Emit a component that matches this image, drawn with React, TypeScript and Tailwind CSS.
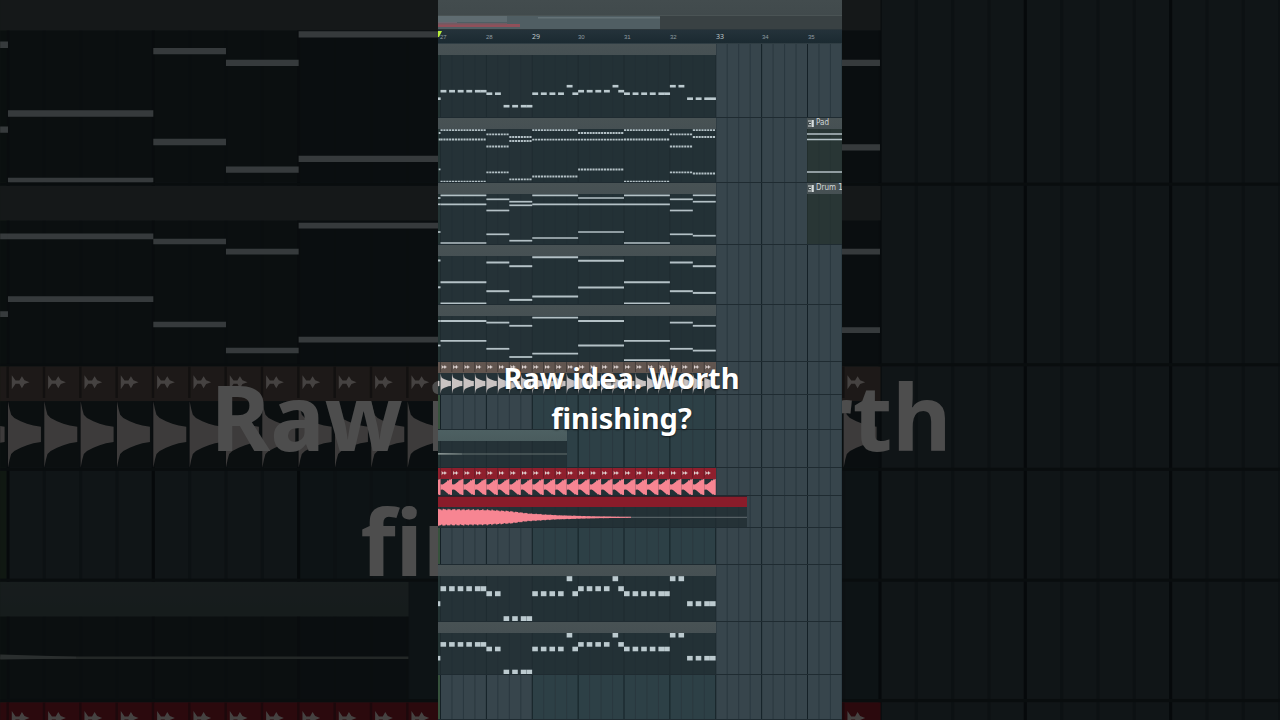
import type { ReactNode } from "react";

const BAR = 45.875;
const STEP = BAR / 16;
const ORIGIN = 2.5;
const barX = (bar: number) => ORIGIN + (bar - 27) * BAR;

type Chord = { from: number; to: number; ys: number[] };

const segments: [number, number][] = [
  [26.9, 27],
  [27, 28],
  [28, 28.5],
  [28.5, 29],
  [29, 30],
  [30, 31],
  [31, 32],
  [32, 32.5],
  [32.5, 33],
];

const toChords = (ys: number[][]): Chord[] =>
  ys.map((y, i) => ({ from: segments[i][0], to: segments[i][1], ys: y }));

const padChords = toChords([
  [4, 10.5, 40.3],
  [1.2, 10.5, 52.7],
  [5.3, 17.5, 43.3],
  [8, 12, 50.3],
  [1.2, 10.6, 47.5],
  [4, 10.6, 40.5],
  [1.2, 10.5, 52.7],
  [5.3, 17.5, 43.3],
  [1.2, 8, 44.5],
]);

const keysChords = toChords([
  [4, 10.3, 38],
  [1.3, 10.3, 49],
  [5.3, 16.5, 40.3],
  [7.7, 11.3, 46.7],
  [1.3, 10.3, 44],
  [4, 10.3, 38],
  [1.3, 10.3, 49],
  [5.3, 16.5, 40.3],
  [1.3, 7.7, 41.7],
]);

const stringsChords = toChords([
  [4.5, 31.3],
  [26.2, 47.5],
  [6.5, 35.2],
  [10.2, 43.9],
  [1.2, 40.5],
  [4.7, 31.5],
  [26.2, 47.5],
  [6.5, 35.2],
  [10.2, 36.9],
]);

const bassChords = toChords([
  [5, 29.5],
  [5, 24.8],
  [6.6, 32.8],
  [9.8, 41],
  [1.6, 37.6],
  [5, 29.5],
  [24.8, 44.2],
  [6.6, 32.8],
  [9.8, 34.6],
]);

// [bar, step, scale degrees below the highest note]
const melody: [number, number, number][] = [
  [26, 14, 5],
  ...[0, 3, 6, 9, 12, 14].map((s) => [27, s, 2] as [number, number, number]),
  ...[0, 3].map((s) => [28, s, 3] as [number, number, number]),
  ...[6, 9, 12, 14].map((s) => [28, s, 8] as [number, number, number]),
  ...[0, 3, 6, 9].map((s) => [29, s, 3] as [number, number, number]),
  [29, 12, 0],
  [29, 14, 3],
  ...[0, 3, 6, 9].map((s) => [30, s, 2] as [number, number, number]),
  [30, 12, 0],
  [30, 14, 2],
  ...[0, 3, 6, 9, 12, 14].map((s) => [31, s, 3] as [number, number, number]),
  ...[0, 3].map((s) => [32, s, 0] as [number, number, number]),
  ...[6, 9, 12, 14].map((s) => [32, s, 5] as [number, number, number]),
];

const beats = Array.from({ length: 25 }, (_, i) => ORIGIN + (i - 1) * (BAR / 4));

function Drawing({ children }: { children: ReactNode }) {
  return (
    <svg className="block h-full w-full overflow-hidden" aria-hidden="true">
      {children}
    </svg>
  );
}

function Melody({ top, unit, height }: { top: number; unit: number; height: number }) {
  return (
    <Drawing>
      {melody.map(([bar, step, down], i) => (
        <rect
          key={i}
          x={barX(bar) + step * STEP}
          y={top + down * unit - height / 2}
          width={height > 3 ? 5.6 : 5.9}
          height={height}
          fill="#bccacf"
        />
      ))}
    </Drawing>
  );
}

function Chords({ chords, thickness, dashed }: { chords: Chord[]; thickness: number; dashed?: boolean }) {
  return (
    <Drawing>
      {chords.flatMap(({ from, to, ys }) =>
        ys.map((y) => (
          <line
            key={`${from}-${y}`}
            x1={barX(from)}
            x2={barX(to)}
            y1={y}
            y2={y}
            stroke="#b4c1c6"
            strokeWidth={thickness}
            strokeDasharray={dashed ? `${STEP - 0.7} 0.7` : undefined}
          />
        )),
      )}
    </Drawing>
  );
}

function Kick() {
  return (
    <Drawing>
      {beats.map((x) => (
        <path
          key={x}
          transform={`translate(${x} 10.5)`}
          d="M0-10.5 L.5-8 L1-6.2 L2-5.2 L4-4.2 L6-3.4 L8-2.8 L10.4-2.4 V2.4 L8 2.8 L6 3.4 L4 4.2 L2 5.2 L1 6.2 L.5 8 L0 10.5Z"
          fill="#c9c3c2"
        />
      ))}
    </Drawing>
  );
}

function Swell() {
  return (
    <Drawing>
      {beats.map((x) => (
        <path
          key={x}
          transform={`translate(${x} 8)`}
          d="M0-2.8 L2-2.4 L3.4-3.2 L5-4.4 L6.4-5.6 L7-7 L8-6.2 L9-7.8 L10-7.2 L10.6-8.2 L11.5-7.8 V7.8 L10.4 8.2 L9 7.2 L8 7.6 L7 6.2 L6 5.6 L4.6 4.2 L3.4 3.2 L2 2.4 L0 2.8Z"
          fill="#f78592"
        />
      ))}
    </Drawing>
  );
}

const crashEnvelope = (x: number) => {
  const points = [
    [0, 8],
    [50, 7.3],
    [72, 6],
    [90, 3.8],
    [120, 2],
    [155, 1],
    [190, 0.5],
    [310, 0.4],
  ];
  const i = Math.max(1, points.findIndex(([px]) => px >= x));
  const [x0, y0] = points[i - 1];
  const [x1, y1] = points[i];
  return y0 + ((y1 - y0) * (x - x0)) / (x1 - x0);
};

const crashPath = (() => {
  const xs = Array.from({ length: 194 }, (_, i) => i);
  const wobble = (i: number) => 1 + 0.1 * Math.sin(i * 2.7) + 0.07 * Math.sin(i * 1.3);
  const up = xs.map((x) => `L${x} ${(10.3 - crashEnvelope(x) * wobble(x)).toFixed(2)}`);
  const down = [...xs].reverse().map((x) => `L${x} ${(10.3 + crashEnvelope(x) * wobble(x + 5)).toFixed(2)}`);
  return `M0 10.3 ${up.join(" ")} ${down.join(" ")}Z`;
})();

function Crash() {
  return (
    <Drawing>
      <line x1="100" x2="309" y1="10.3" y2="10.3" stroke="#727b7d" strokeWidth="0.8" />
      <path d={crashPath} fill="#f78592" />
    </Drawing>
  );
}

function Tail() {
  return (
    <Drawing>
      <line x1="0" x2="129" y1="13" y2="13" stroke="#75807f" strokeWidth="0.8" />
      <path d="M0 12 L24 12.7 V13.2 L0 13.5Z" fill="#8d9897" />
    </Drawing>
  );
}

function BeatHeader({ divider }: { divider: string }) {
  return (
    <Drawing>
      {beats.map((x) => (
        <g key={x} transform={`translate(${x} 5)`}>
          <rect x="-0.5" y="-6" width="0.8" height="12" fill={divider} />
          <path d="M1.2-2.2 L2.4-.5 L3.6-.5 L4.4-1.9 L5.2-.6 L6.8 0 L5.2.6 L4.4 1.9 L3.6 .5 L2.4.5 L1.2 2.2Z" fill="#e3d9d7" />
        </g>
      ))}
    </Drawing>
  );
}

function PatternIcon() {
  return (
    <svg viewBox="0 0 6 7" className="h-[7px] w-[6px] shrink-0" aria-hidden="true">
      <path d="M0 .5H3V1.5H0ZM1 3H3V4H1ZM0 5.5H3V6.5H0ZM3.5 0H5.8V7H3.5Z" fill="#d8dede" />
    </svg>
  );
}

type ClipProps = { width: string; header?: string; body?: string; title?: string; beats?: string; children?: ReactNode };

function Clip({
  width,
  header = "bg-linear-to-b from-[#485254] to-[#465053]",
  body = "bg-[#212d32]/80",
  title,
  beats: divider,
  children,
}: ClipProps) {
  return (
    <div className={`flex h-full shrink-0 flex-col overflow-hidden ${width}`}>
      <div className={`flex h-[11px] shrink-0 items-center gap-[2px] overflow-hidden pb-px ${header}`}>
        {title && (
          <span className="flex items-center gap-[2px] pl-px">
            <PatternIcon />
            <span className="font-['DejaVu_Sans_Condensed','DejaVu_Sans',sans-serif] text-[8px] leading-none whitespace-nowrap text-[#d0d8d8]">
              {title}
            </span>
          </span>
        )}
        {divider && <BeatHeader divider={divider} />}
      </div>
      <div className={`min-h-0 flex-1 ${body}`}>{children}</div>
    </div>
  );
}

function Track({ height, children }: { height: string; children?: ReactNode }) {
  return <div className={`flex shrink-0 border-b border-[#1f2b31] ${height}`}>{children}</div>;
}

function Grid() {
  return (
    <svg className="absolute inset-0 h-full w-full" aria-hidden="true">
      <rect width="100%" height="100%" fill="#37454c" />
      <rect x={barX(29)} width={BAR * 4} height="100%" fill="#2d4046" />
      {Array.from({ length: 36 }, (_, i) => (
        <rect
          key={i}
          x={ORIGIN + i * (BAR / 4) - 0.5}
          width="1"
          height="100%"
          fill={i % 4 === 0 ? "#142026" : "#2a383f"}
        />
      ))}
      <rect x="0" width="2" height="100%" fill="#36523c" />
    </svg>
  );
}

const full = "w-[278px]";

function Playlist({ labels = true }: { labels?: boolean }) {
  return (
    <div className="flex w-full flex-col overflow-hidden bg-[#37454c]">
      <div className="h-[15px] shrink-0 bg-linear-to-b from-[#434c4e] to-[#414a4c]" />
      <svg className="block h-[15px] w-full shrink-0 bg-[#394143]" aria-hidden="true">
        <rect width="100%" height="1" fill="#4a5354" />
        <rect y="1" width="222" height="13" fill="#505e63" />
        <rect y="1" width="69" height="6" fill="#5f6c71" />
        <rect x="100" y="2" width="122" height="1.5" fill="#647277" />
        <rect y="7" width="19" height="1" fill="#6e6570" />
        <rect y="9" width="82" height="3" fill="#90505a" />
        <rect y="8" width="69" height="1.5" fill="#715a62" />
        <rect y="14" width="100%" height="1" fill="#2b363b" />
      </svg>
      <div className="relative flex h-[14px] shrink-0 items-center overflow-hidden border-b border-[#2f3d43] bg-linear-to-b from-[#24323a] to-[#1b2a31] pl-[2px]">
        <svg viewBox="0 0 4 6" className="absolute top-px left-0 h-[6px] w-[4px]" aria-hidden="true">
          <path d="M0 0H4L1 6H0Z" fill="#b9ee3c" />
        </svg>
        {labels &&
          [27, 28, 29, 30, 31, 32, 33, 34, 35].map((bar) => (
            <span
              key={bar}
              className={
                bar === 29 || bar === 33
                  ? "w-[46px] shrink-0 font-['Open_Sans',sans-serif] text-[7px] leading-none text-[#c3cdd1]"
                  : "w-[46px] shrink-0 font-['Liberation_Sans',sans-serif] text-[6px] leading-none text-[#8f9ca1]"
              }
            >
              {bar}
            </span>
          ))}
      </div>
      <div className="relative">
        <Grid />
        <div className="relative flex flex-col">
          <Track height="h-[74px]">
            <Clip width={full}>
              <Melody top={31.2} unit={2.5} height={2.6} />
            </Clip>
          </Track>
          <Track height="h-[65px]">
            <Clip width={full}>
              <Chords chords={padChords} thickness={1.8} dashed />
            </Clip>
            <div className="w-[91px] shrink-0" />
            <Clip width="w-[35px]" title={labels ? "Pad" : undefined} body="bg-[#26322f]/80">
              <Drawing>
                {[5, 10.5, 43].map((y) => (
                  <line key={y} x1="0" x2="100%" y1={y} y2={y} stroke="#b4c1c6" strokeWidth="1.6" />
                ))}
              </Drawing>
            </Clip>
          </Track>
          <Track height="h-[62px]">
            <Clip width={full}>
              <Chords chords={keysChords} thickness={1.7} />
            </Clip>
            <div className="w-[91px] shrink-0" />
            <Clip width="w-[35px]" title={labels ? "Drum 1" : undefined} body="bg-[#26322f]/80" />
          </Track>
          <Track height="h-[60px]">
            <Clip width={full}>
              <Chords chords={stringsChords} thickness={2} />
            </Clip>
          </Track>
          <Track height="h-[57px]">
            <Clip width={full}>
              <Chords chords={bassChords} thickness={1.8} />
            </Clip>
          </Track>
          <Track height="h-[33px]">
            <Clip width={full} header="bg-[#61554f]" beats="#3d3735">
              <Kick />
            </Clip>
          </Track>
          <Track height="h-[35px]" />
          <Track height="h-[38px]">
            <Clip width="w-[129px]" header="bg-linear-to-b from-[#4d6062] to-[#4a5c5e]">
              <Tail />
            </Clip>
          </Track>
          <Track height="h-[28px]">
            <Clip width={full} header="bg-[#8f1f2d]" beats="#5f1c27">
              <Swell />
            </Clip>
          </Track>
          <Track height="h-[32px]">
            <Clip width="w-[309px]" header="border-t border-[#3a1f28] bg-[#8a1c2a]">
              <Crash />
            </Clip>
          </Track>
          <Track height="h-[37px]" />
          <Track height="h-[57px]">
            <Clip width={full}>
              <Melody top={2.7} unit={5} height={5} />
            </Clip>
          </Track>
          <Track height="h-[53px]">
            <Clip width={full}>
              <Melody top={2.2} unit={4.6} height={4.6} />
            </Clip>
          </Track>
          <Track height="h-[45px]" />
        </div>
      </div>
    </div>
  );
}

export default function App() {
  return (
    <main className="relative flex min-h-screen items-center justify-center overflow-hidden bg-black font-['Noto_Sans',sans-serif]">
      <div className="absolute inset-0 overflow-hidden opacity-30" aria-hidden="true">
        <div className="absolute inset-0 flex items-center justify-center">
          <div className="w-full max-w-[404px] shrink-0 scale-[3.168]">
            <Playlist labels={false} />
          </div>
        </div>
        <div className="absolute inset-0 flex items-center justify-center pt-[238px] pr-[118px]">
          <p className="w-[860px] shrink-0 text-center text-[91px] leading-[125px] font-bold text-white">
            Raw idea. Worth finishing?
          </p>
        </div>
      </div>
      <section className="relative w-full max-w-[404px] overflow-hidden" aria-label="Short video">
        <Playlist />
        <div className="absolute inset-0 flex items-center justify-center pt-[76px] pr-[37px]">
          <h1 className="w-[272px] text-center text-[29px] leading-[40px] font-bold text-white [text-shadow:0_1px_2px_rgb(0_0_0/0.6)]">
            Raw idea. Worth finishing?
          </h1>
        </div>
      </section>
    </main>
  );
}
